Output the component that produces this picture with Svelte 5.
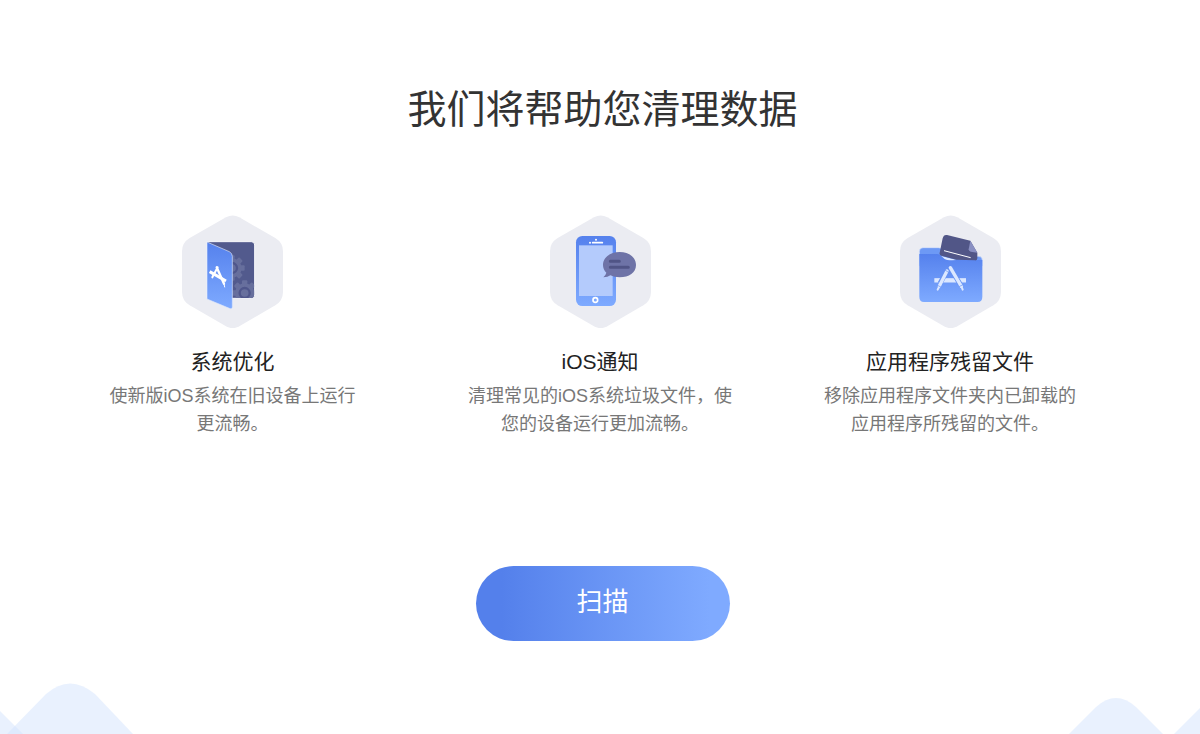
<script lang="ts">
	interface Feature {
		icon: 'system' | 'notice' | 'leftover';
		title: string;
		text: string;
	}

	const features: Feature[] = [
		{
			icon: 'system',
			title: '系统优化',
			text: '使新版iOS系统在旧设备上运行\n更流畅。'
		},
		{
			icon: 'notice',
			title: 'iOS通知',
			text: '清理常见的iOS系统垃圾文件，使\n您的设备运行更加流畅。'
		},
		{
			icon: 'leftover',
			title: '应用程序残留文件',
			text: '移除应用程序文件夹内已卸载的\n应用程序所残留的文件。'
		}
	];

	const teeth = [0, 45, 90, 135, 180, 225, 270, 315];
</script>

{#snippet gear(cx: number, cy: number)}
	<g transform="translate({cx} {cy})">
		{#each teeth as angle}
			<rect x="-8" y="-38" width="16" height="20" rx="3" transform="rotate({angle})" />
		{/each}
		<circle r="29" />
		<circle r="15" fill="none" stroke="#4f568b" stroke-width="7" />
	</g>
{/snippet}

<main class="page" lang="zh-CN">
	<h1 class="headline">我们将帮助您清理数据</h1>

	<section class="features">
		{#each features as feature (feature.icon)}
			<article class="feature">
				<svg class="feature-icon" viewBox="30 27 303 339" aria-hidden="true">
					<defs>
						<linearGradient id="{feature.icon}-blue" x1="0" y1="0" x2="0" y2="1">
							<stop offset="0" stop-color="#5581ed" />
							<stop offset="1" stop-color="#7eaaff" />
						</linearGradient>
						<clipPath id="{feature.icon}-clip">
							<path d="M105 108H238Q247 108 247 117V267Q247 276 238 276H105Z" />
						</clipPath>
					</defs>
					<path
						fill="#ebecf2"
						d="M162 34Q182 23 202 34L310 96Q333 110 333 136V258Q333 284 310 298L202 361Q182 372 162 361L53 298Q30 284 30 258V136Q30 110 53 96Z"
					/>
					{#if feature.icon === 'system'}
						<path
							fill="#525a8d"
							stroke="#f7f8fc"
							stroke-width="3"
							d="M105 107H238Q248 107 248 117V267Q248 277 238 277H105Z"
						/>
						<g fill="#676f9d" clip-path="url(#system-clip)">
							{@render gear(180, 186)}
							{@render gear(218, 261)}
						</g>
						<path
							fill="url(#system-blue)"
							stroke="#dce6fb"
							stroke-width="2"
							d="M105 108L172 137Q181 142 181 151V302Q181 311 172 307L105 279Z"
						/>
						<g fill="none" stroke="#fff" stroke-linecap="round" stroke-linejoin="round">
							<path stroke-width="9" stroke-linecap="butt" d="M113 197L162 225" />
							<path stroke-width="6" d="M137 184L121 214" />
							<path stroke-width="7" d="M134 184L156 233" />
							<path stroke-width="3" d="M156 233L158 243" />
						</g>
					{:else if feature.icon === 'notice'}
						<rect x="108" y="90" width="120" height="210" rx="19" fill="url(#notice-blue)" />
						<rect x="117" y="118" width="101" height="152" fill="#b4cbfc" />
						<circle cx="168" cy="101" r="3" fill="#fff" />
						<circle cx="150" cy="110" r="3" fill="#fff" />
						<path stroke="#fff" stroke-width="5" stroke-linecap="round" d="M158 110H187" />
						<circle cx="166" cy="282" r="7" fill="none" stroke="#fff" stroke-width="5" />
						<path
							fill="#6e73a7"
							d="M239 138C267 138 288 154 288 177C288 200 267 214 239 214C228 214 219 212 211 208Q204 214 190 214Q198 206 199 200C192 194 189 185 189 177C189 154 211 138 239 138Z"
						/>
						<path
							stroke="#505486"
							stroke-width="9"
							stroke-linecap="round"
							d="M211 166H238M211 184H265"
						/>
					{:else}
						<path
							fill="#6d99f5"
							stroke="#dce6fb"
							stroke-width="2"
							d="M99 125H145Q155 125 159 132Q168 149 180 151H266Q277 151 277 162V180H88V136Q88 125 99 125Z"
						/>
						<path
							fill="url(#leftover-blue)"
							d="M88 144H142Q149 144 155 151Q163 161 180 162H277V272Q277 288 263 288H102Q88 288 88 272Z"
						/>
						<path fill="#dce8ff" d="M154 150L199 162Q172 164 163 158Z" />
						<path
							fill="#515687"
							d="M171 87L241 104L262 140V157Q262 164 255 163L199 161L154 149Q147 147 149 140L158 97Q161 85 171 87Z"
						/>
						<path fill="#898fc2" d="M241 104L236 130Q236 136 242 137L262 140Z" />
						<path fill="none" stroke="#fff" stroke-width="3" d="M162 134L242 155" />
						<g fill="none" stroke="#dce8ff">
							<path stroke-width="13" d="M133 223H228" />
							<path stroke="#6793f3" stroke-width="15" d="M173 190L150 232M180 184L210 234" />
							<path stroke-width="10" stroke-linecap="round" d="M171 195L148 240M181 185L214 241" />
							<path stroke-width="6" stroke-linecap="round" d="M147 243L143 251M215 243L218 251" />
							<path stroke="#6793f3" stroke-width="2" d="M165 192L177 200M141 237L154 244M207 242L221 235" />
						</g>
					{/if}
				</svg>
				<h2 class="feature-title">{feature.title}</h2>
				<p class="feature-text">{feature.text}</p>
			</article>
		{/each}
	</section>

	<button type="button" class="scan-button">扫描</button>

	<div class="hills" aria-hidden="true">
		<svg width="134" height="52" viewBox="0 0 134 52">
			<path d="M7 52L46 12Q70 -9 95 12L133 52Z" />
			<path d="M0 29L23 52H0Z" />
		</svg>
		<svg width="132" height="52" viewBox="0 0 132 52">
			<path d="M1 52L28 25Q48 7 68 25L95 52Z" />
			<path d="M106 52L132 26V52Z" />
		</svg>
	</div>
</main>

<style>
	:global(body) {
		margin: 0;
		background: #fff;
	}

	.page {
		display: flex;
		flex-direction: column;
		align-items: center;
		box-sizing: border-box;
		min-height: 100vh;
		padding-top: 82px;
		font-family: 'Liberation Sans', 'Noto Sans CJK SC', sans-serif;
		text-align: center;
	}

	.headline {
		margin: 0 0 77px;
		padding-left: 5px;
		font-size: 39px;
		font-weight: 400;
		line-height: 56px;
		color: #333;
	}

	.features {
		display: grid;
		grid-template-columns: 1.1fr 1fr 1fr;
		box-sizing: border-box;
		width: 100%;
		padding: 0 75px 0 40px;
	}

	.feature {
		display: flex;
		flex-direction: column;
		align-items: center;
	}

	.feature-icon {
		width: 101px;
		height: 113px;
	}

	.feature-title {
		margin: 18px 0 4px;
		font-size: 21px;
		font-weight: 400;
		line-height: 32px;
		color: #222;
	}

	.feature-text {
		margin: 0;
		font-size: 18px;
		line-height: 28px;
		color: #777;
		white-space: pre-line;
	}

	.scan-button {
		width: 254px;
		height: 75px;
		margin: 128px 0 40px 5px;
		padding: 0 0 8px;
		border: none;
		border-radius: 38px;
		background: linear-gradient(90deg, #5480eb 10%, #7faaff 92%);
		font-family: inherit;
		font-size: 26px;
		font-weight: 400;
		color: #fff;
		cursor: pointer;
	}

	.hills {
		display: flex;
		justify-content: space-between;
		width: 100%;
		margin-top: auto;
	}

	.hills path {
		fill: #d3e4fd;
		fill-opacity: 0.5;
	}
</style>
